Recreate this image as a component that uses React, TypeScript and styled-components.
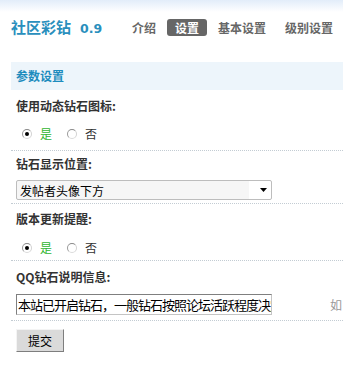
import React from 'react';
import styled, { createGlobalStyle } from 'styled-components';

const Global = createGlobalStyle`
  html, body { margin: 0; padding: 0; background: #fff; }
  body {
    font-family: "Noto Sans CJK SC", "Noto Sans", sans-serif;
    font-size: 12px;
    color: #333;
    width: 343px;
    height: 370px;
    overflow: hidden;
  }
`;

const Page = styled.div`
  width: 343px;
`;

const Header = styled.header`
  display: flex;
  align-items: center;
  height: 17px;
  padding: 19px 0 26px 11px;
  background: linear-gradient(#e2edf9 0, #fff 12px);
`;

const Title = styled.h1`
  margin: 0;
  width: 114px;
  flex: none;
  font-size: 15px;
  line-height: 17px;
  font-weight: bold;
  color: #2a8fbd;
  white-space: nowrap;
`;

const Version = styled.span`
  margin-left: 9px;
  font-family: "DejaVu Sans", Verdana, sans-serif;
  font-size: 12.5px;
  font-weight: bold;
`;

const Nav = styled.nav`
  display: flex;
  gap: 3px;
  margin-left: -1px;
`;

const NavItem = styled.a<{ $active?: boolean }>`
  display: block;
  padding: 0 8px;
  line-height: 17px;
  font-size: 12px;
  font-weight: bold;
  border-radius: 3px;
  white-space: nowrap;
  color: ${(p) => (p.$active ? '#fff' : '#666')};
  background: ${(p) => (p.$active ? '#666' : 'transparent')};
`;

const Form = styled.form`
  margin: 0 0 0 11px;
`;

const Band = styled.h2`
  margin: 0;
  height: 28px;
  line-height: 28px;
  padding-left: 5px;
  font-size: 12px;
  font-weight: bold;
  color: #1d8cbe;
  background: #edf5fb;
`;

const Label = styled.div<{ $pt: number; $h: number }>`
  box-sizing: border-box;
  height: ${(p) => p.$h}px;
  padding: ${(p) => p.$pt}px 0 0 5px;
  line-height: 16px;
  font-weight: bold;
  color: #333;
  white-space: nowrap;
`;

const ValueRow = styled.div<{ $h: number }>`
  display: flex;
  align-items: center;
  height: ${(p) => p.$h}px;
  border-bottom: 1px dotted #c3ccd3;
`;

const Control = styled.div`
  box-sizing: border-box;
  width: 314px;
  flex: none;
  padding-left: 5px;
  display: flex;
  align-items: center;
`;

const Hint = styled.div`
  padding-left: 5px;
  color: #999;
  white-space: nowrap;
`;

const Option = styled.label<{ $checked?: boolean }>`
  display: flex;
  align-items: center;
  margin-right: 15px;
  color: ${(p) => (p.$checked ? '#2fb52f' : '#333')};
  line-height: 14px;
  &:first-child { margin-left: 6px; }
`;

const RadioDot = styled.span<{ $checked?: boolean }>`
  box-sizing: border-box;
  width: 10px;
  height: 10px;
  margin-right: 8px;
  border-radius: 50%;
  border: 1px solid;
  border-color: #8a8a8a #d2d2d2 #dadada #999;
  background: #fff;
  display: grid;
  place-items: center;
  &::after {
    content: '';
    width: 4px;
    height: 4px;
    border-radius: 50%;
    background: ${(p) => (p.$checked ? '#000' : 'transparent')};
  }
`;

const SelectBox = styled.div`
  box-sizing: border-box;
  width: 256px;
  height: 20px;
  display: flex;
  align-items: center;
  border: 1px solid #bdbdbd;
  border-radius: 2px;
  background: linear-gradient(to right, #f6f6f6 0, #f6f6f6 calc(100% - 22px), #fff calc(100% - 22px));
`;

const SelectEl = styled.select`
  flex: 1;
  appearance: none;
  -webkit-appearance: none;
  border: none;
  background: transparent;
  padding: 0 0 0 3px;
  margin: 0;
  height: 18px;
  font-family: "Noto Sans CJK SC", sans-serif;
  font-size: 12px;
  color: #000;
  outline: none;
`;

const Arrow = styled.svg`
  flex: none;
  margin-right: 4px;
`;

const TextInput = styled.input`
  box-sizing: border-box;
  width: 256px;
  height: 21px;
  margin: 0;
  padding: 0 0 0 1px;
  border: 1px solid;
  border-color: #7f7f7f #c4c4c4 #c4c4c4 #7f7f7f;
  font-family: "Noto Sans CJK SC", sans-serif;
  font-size: 13px;
  letter-spacing: -1px;
  color: #000;
  outline: none;
`;

const Submit = styled.button`
  display: block;
  box-sizing: border-box;
  width: 48px;
  height: 23px;
  margin: 8px 0 0 5px;
  padding: 0;
  border: 1px solid;
  border-color: #f4f4f4 #7e7e7e #7e7e7e #f4f4f4;
  background: #dadada;
  font-family: "Noto Sans CJK SC", sans-serif;
  font-size: 12px;
  color: #000;
`;

type RadioProps = { value: boolean };
const YesNo = ({ value }: RadioProps) => (
  <>
    <Option $checked={value}>
      <RadioDot $checked={value} />是
    </Option>
    <Option $checked={!value}>
      <RadioDot $checked={!value} />否
    </Option>
  </>
);

export default function App() {
  return (
    <Page>
      <Global />
      <Header>
        <Title>
          社区彩钻<Version>0.9</Version>
        </Title>
        <Nav>
          <NavItem>介绍</NavItem>
          <NavItem $active>设置</NavItem>
          <NavItem>基本设置</NavItem>
          <NavItem>级别设置</NavItem>
        </Nav>
      </Header>
      <Form onSubmit={(e) => e.preventDefault()}>
        <Band>参数设置</Band>

        <Label $pt={8} $h={27}>使用动态钻石图标:</Label>
        <ValueRow $h={33}>
          <Control>
            <YesNo value={true} />
          </Control>
        </ValueRow>

        <Label $pt={5} $h={26}>钻石显示位置:</Label>
        <ValueRow $h={26}>
          <Control>
            <SelectBox>
              <SelectEl defaultValue="a">
                <option value="a">发帖者头像下方</option>
                <option value="b">发帖者头像上方</option>
              </SelectEl>
              <Arrow width="7" height="4" viewBox="0 0 7 4">
                <polygon points="0,0 7,0 3.5,4" fill="#000" />
              </Arrow>
            </SelectBox>
          </Control>
        </ValueRow>

        <Label $pt={7} $h={31}>版本更新提醒:</Label>
        <ValueRow $h={25}>
          <Control>
            <YesNo value={true} />
          </Control>
        </ValueRow>

        <Label $pt={8} $h={28}>QQ钻石说明信息:</Label>
        <ValueRow $h={31}>
          <Control>
            <TextInput defaultValue="本站已开启钻石，一般钻石按照论坛活跃程度决定，" />
          </Control>
          <Hint>如</Hint>
        </ValueRow>

        <Submit type="submit">提交</Submit>
      </Form>
    </Page>
  );
}
